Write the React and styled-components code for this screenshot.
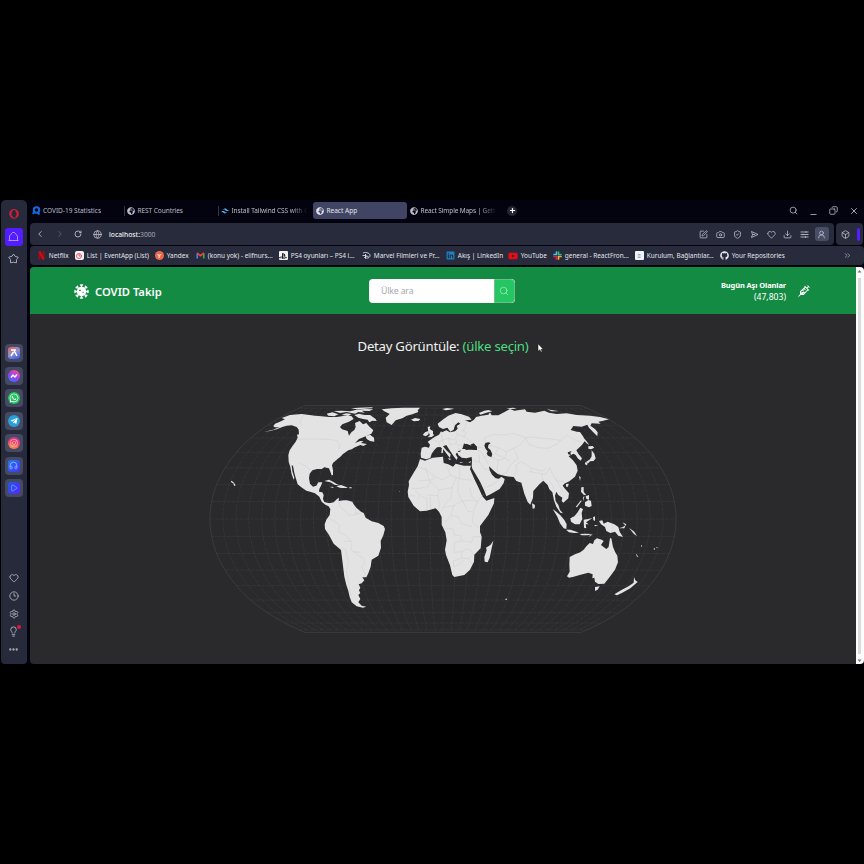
import React from "react";
import styled, { createGlobalStyle, css } from "styled-components";
import {
  FaGlobeAfrica, FaWhatsapp, FaTelegramPlane, FaInstagram,
  FaYoutube, FaGithub, FaLinkedin, FaPlaystation, FaOpera,
} from "react-icons/fa";
import { SiTailwindcss } from "react-icons/si";
import {
  Search, Minus, Copy, X, Camera, ShieldCheck, Heart, Download,
  UserRound, Box, ChevronsRight, ChevronLeft, ChevronRight,
  RotateCw, Globe, Clock3, Settings, Lightbulb, Ellipsis, Plus, SquarePen, Play, Headphones,
} from "lucide-react";

const Global = createGlobalStyle`
  * { box-sizing: border-box; }
  body { margin: 0; background: #000; font-family: "Noto Sans", "Open Sans", sans-serif; }
  svg { display: block; flex: none; }
`;

const Screen = styled.div`
  width: 864px;
  height: 864px;
  padding: 200px 0 200px 1px;
  background: #000;
  overflow: hidden;
`;
const Browser = styled.div`
  display: flex;
  height: 464px;
  background: #02030f;
`;
const Sidebar = styled.aside`
  width: 26px;
  padding-right: 1px;
  display: flex;
  flex-direction: column;
  align-items: center;
  background: #262a3a;
  border-radius: 5px 5px 4px 4px;
  color: #b4b6c2;
`;
const SideSlot = styled.div`
  width: 18px;
  height: 18px;
  margin-top: ${(p) => p.$gap || 0}px;
  display: flex;
  align-items: center;
  justify-content: center;
  flex: none;
  position: relative;
`;
const HomeButton = styled(SideSlot)`
  background: #541dff;
  border-radius: 3px;
  color: #a9a3ff;
`;
const AppButton = styled(SideSlot)`
  background: #454961;
  border-radius: 4px;
`;
const AppFace = styled.span`
  display: grid;
  place-items: center;
  width: 12px;
  height: 12px;
  color: #fff;
  background: ${(p) => p.$bg};
  border-radius: ${(p) => (p.$round ? "50%" : "3px")};
`;
const Alert = styled.span`
  position: absolute;
  top: 2px;
  right: 2px;
  width: 4px;
  height: 4px;
  border-radius: 50%;
  background: #e01844;
`;
const Main = styled.div`
  width: 834px;
  margin-left: 3px;
  display: flex;
  flex-direction: column;
`;
const TabStrip = styled.div`
  height: 23px;
  display: flex;
  align-items: flex-start;
  padding-top: 2px;
`;
const Tab = styled.div`
  width: ${(p) => p.$w}px;
  height: 17px;
  display: flex;
  align-items: center;
  gap: ${(p) => (p.$first ? 2 : 2.5)}px;
  padding-left: ${(p) => (p.$first ? 2 : 3)}px;
  font-size: 6.5px;
  letter-spacing: ${(p) => p.$ls || 0}px;
  white-space: nowrap;
  color: #bcbdc7;
  border-radius: 3px;
  flex: none;
  ${(p) => p.$divider && css`
    background: linear-gradient(#343746, #343746) 0 50% / 1px 10px no-repeat;
  `}
  ${(p) => p.$active && css`
    background: #414563;
    color: #e4e5ec;
  `}
`;
const TabText = styled.span`
  ${(p) => p.$fade && css`mask-image: linear-gradient(90deg, #000 78%, transparent);`}
`;
const NewTab = styled.div`
  width: 10px;
  height: 10px;
  margin: 3.5px 0 0 7px;
  border-radius: 50%;
  background: #242636;
  display: grid;
  place-items: center;
  color: #fff;
`;
const WindowButtons = styled.div`
  margin-left: auto;
  display: flex;
  align-items: center;
  height: 17px;
  gap: 11px;
  padding-right: 5px;
  color: #c4c5ce;
`;
const MinimizeIcon = styled(Minus)`
  margin-top: 7px;
`;
const RestoreIcon = styled(Copy)`
  transform: scaleX(-1);
`;
const AddressRow = styled.div`
  height: 22px;
  display: flex;
  gap: 2px;
  margin-bottom: 1px;
`;
const AddressBar = styled.div`
  width: 804px;
  display: flex;
  align-items: center;
  background: #272b3b;
  border-radius: 4px;
  color: #c3c5cf;
`;
const NavIcons = styled.div`
  display: grid;
  grid-template-columns: 20px 20px 16px 23px;
  width: 79px;
  align-items: center;
  justify-items: center;
`;
const Url = styled.div`
  font-size: 6.75px;
  color: #a9abb7;
  b { font-weight: 500; color: #f0f0f5; }
`;
const Actions = styled.div`
  margin-left: auto;
  display: flex;
  align-items: center;
  gap: 7.8px;
  padding-right: 8px;
`;
const Profile = styled.div`
  display: grid;
  place-items: center;
  width: 14px;
  height: 14px;
  margin: 0 -2.5px;
  background: #4a4d66;
  border-radius: 3px;
`;
const CubeBar = styled.div`
  width: 27px;
  background: #272b3b;
  border-radius: 4px;
  display: flex;
  align-items: center;
  justify-content: space-between;
  padding: 0 3px 0 5px;
  color: #c3c5cf;
`;
const Accent = styled.span`
  width: 3px;
  height: 13px;
  background: #541dff;
  border-radius: 2px;
`;
const Bookmarks = styled.div`
  height: 19px;
  display: flex;
  align-items: center;
  background: #272b3b;
  border-radius: 4px;
  margin-bottom: 2px;
  padding-left: 6.8px;
`;
const Bookmark = styled.div`
  width: ${(p) => p.$w}px;
  display: flex;
  align-items: center;
  gap: 3px;
  font-size: 6.45px;
  white-space: nowrap;
  color: #e4e5eb;
  flex: none;
`;
const MoreBookmarks = styled(ChevronsRight)`
  margin-left: 43px;
  color: #a5a7b3;
`;
const Chip = styled.span`
  width: 9px;
  height: 9px;
  flex: none;
  display: grid;
  place-items: center;
  border-radius: ${(p) => p.$r || 1}px;
  background: ${(p) => p.$bg || "transparent"};
  color: ${(p) => p.$fg || "#fff"};
  font: 700 6px/1 "Liberation Sans", sans-serif;
`;
const Page = styled.div`
  display: flex;
  height: 397px;
  border-radius: 4px;
  overflow: hidden;
`;
const Viewport = styled.main`
  width: 826px;
  background: #2a2a2c;
`;
const Header = styled.header`
  height: 47px;
  background: #138b43;
  display: flex;
  align-items: center;
  padding: 0 46px 0 44px;
  color: #fff;
`;
const Brand = styled.div`
  display: flex;
  align-items: center;
  gap: 6px;
  width: 295px;
  font-size: 11.2px;
  font-weight: 600;
  padding-top: 1px;
`;
const SearchBox = styled.div`
  display: flex;
  width: 146px;
  height: 24px;
  border-radius: 4px;
  overflow: hidden;
  background: #fff;
`;
const Field = styled.div`
  width: 125px;
  padding-left: 12px;
  font-size: 8.7px;
  letter-spacing: -0.15px;
  line-height: 25px;
  color: #a5a8ae;
`;
const SearchButton = styled.div`
  width: 21px;
  border: 1px solid #72b98d;
  border-radius: 0 4px 4px 0;
  background: #23c660;
  display: grid;
  place-items: center;
  padding-right: 1px;
  color: #a7edc1;
`;
const Vaccinated = styled.div`
  margin-left: auto;
  margin-right: 12px;
  text-align: right;
  font-size: 7.5px;
  line-height: 12px;
  b { display: block; font-weight: 700; letter-spacing: -0.12px; }
  span { font-size: 8.6px; }
`;
const Title = styled.h1`
  margin: 0;
  height: 66px;
  padding-top: 22px;
  text-align: center;
  font-size: 13.2px;
  letter-spacing: -0.26px;
  line-height: 20px;
  font-weight: 400;
  color: #f1f1f1;
  span { color: #4ade80; }
`;
const MapArea = styled.div`
  position: relative;
  height: 284px;
`;
const Pointer = styled.svg`
  position: absolute;
  left: 507px;
  top: -37px;
`;
const Scrollbar = styled.div`
  width: 8px;
  background: #fcfcfc;
  display: flex;
  flex-direction: column;
  align-items: center;
  justify-content: space-between;
  padding: 2px 1px 1px 0;
  color: #777;
`;
const Thumb = styled.span`
  width: 3px;
  height: 376px;
  background: #dadada;
`;

/* Equal Earth projection, centred on 10°E */
const K = 86.1;
const project = (lon, lat) => {
  const m = Math.sqrt(3) / 2;
  const t = Math.asin(m * Math.sin((lat * Math.PI) / 180));
  const t2 = t * t;
  const t6 = t2 * t2 * t2;
  const x = ((lon * Math.PI) / 180) * Math.cos(t) /
    (m * (1.340264 + 3 * -0.081106 * t2 + t6 * (7 * 0.000893 + 9 * 0.003796 * t2)));
  const y = t * (1.340264 - 0.081106 * t2 + t6 * (0.000893 + 0.003796 * t2));
  return `${(413 + K * x).toFixed(2)} ${(139 - K * y).toFixed(2)}`;
};
const range = (a, b, s) => Array.from({ length: Math.floor((b - a) / s) + 1 }, (_, i) => a + i * s);
const line = (pts) => "M" + pts.join("L");
const graticule = [
  ...range(-170, 170, 10).map((lon) => line(range(-80, 80, 4).map((lat) => project(lon, lat)))),
  ...range(-80, 80, 10).map((lat) => line([project(-180, lat), project(180, lat)])),
].join("");
const sphere = line([
  ...range(-90, 90, 3).map((lat) => project(-180, lat)),
  ...range(-90, 90, 3).reverse().map((lat) => project(180, lat)),
]) + "Z";

const land = [
  // North and Central America
  "M178 110 205 104 216 99 225 97 210 97 205 94 210 86 225 80 240 73 230 69 255 60 290 57 330 62 350 64 372 66 395 66 410 64 425 60 440 64 446 72 432 80 412 88 405 96 411 103 428 108 432 122 439 112 448 105 452 96 450 84 464 78 474 88 484 84 492 94 505 106 499 116 482 124 462 132 450 144 466 138 476 139 468 144 486 147 475 153 466 150 450 157 440 163 430 166 413 178 408 184 395 194 384 204 381 211 384 226 384 240 380 241 376 230 372 220 358 217 350 222 336 222 322 226 314 236 312 250 315 266 324 275 334 272 340 262 352 262 348 272 343 282 342 290 352 292 356 300 354 312 358 321 370 324 378 325 370 333 362 330 350 320 343 305 330 295 318 291 304 287 288 276 278 268 272 248 268 234 264 212 260 211 262 228 268 248 266 254 260 238 256 216 251 200 250 180 254 166 262 154 272 140 278 128 276 119 282 118 281 104 275 96 260 91 244 92 232 96 215 103 195 108Z",
  "M365 56 382 52 400 58 388 64 370 62ZM386 48 410 47 435 49 455 44 480 42 505 43 493 48 470 47 480 53 460 51 450 56 425 51 405 54ZM410 59 424 55 440 57 430 62ZM448 60 462 56 478 60 495 60 512 72 515 78 502 77 493 82 488 74 474 72 460 68ZM438 40 460 38 500 37 505 39 480 41 455 43ZM482 124 495 119 507 128 508 140 495 138 485 132Z",
  "M358 258 372 254 384 260 396 268 404 271 390 270 376 262ZM394 274 408 270 422 275 429 279 412 279 404 278ZM374 276 384 275 386 279ZM433 277 440 277 440 280 433 280Z",
  // South America
  "M370 333 376 324 386 322 396 312 402 308 401 318 416 316 426 316 442 320 446 328 454 338 468 350 476 354 482 368 500 379 520 384 536 393 540 402 535 421 527 438 528 458 520 482 500 494 497 515 490 535 484 547 472 547 478 556 470 565 461 568 466 578 462 586 466 594 460 600 466 612 460 622 470 632 484 635 474 638 455 634 440 622 434 606 430 588 424 570 418 545 413 505 408 465 386 446 372 420 360 402 359 388 364 374 374 360 376 342Z",
  // Greenland, Iceland
  "M530 43 560 40 595 38 645 38 638 46 640 51 622 58 605 62 592 70 572 76 560 90 545 82 542 68 554 57 538 49ZM618 74 630 69 646 72 642 77 627 79ZM712 42 726 39 748 41 734 44 722 46Z",
  // Europe and Asia
  "M648 188 647 176 650 158 660 155 672 158 675 149 668 140 680 132 690 125 702 119 708 109 711 112 724 106 735 112 750 109 758 101 755 93 766 86 760 82 750 91 746 104 736 110 727 98 714 102 702 96 698 86 715 73 730 62 752 54 770 58 792 65 800 74 780 76 795 82 807 74 813 66 830 62 850 59 855 52 860 61 880 61 900 50 915 42 928 47 960 43 965 50 990 53 1018 47 1032 53 1055 57 1085 55 1115 60 1155 62 1185 66 1212 73 1195 77 1180 80 1187 86 1160 85 1156 92 1170 102 1178 112 1177 124 1165 112 1152 98 1147 89 1130 95 1105 93 1097 105 1115 110 1125 111 1135 125 1140 137 1133 147 1130 151 1114 166 1120 176 1131 190 1127 197 1118 190 1112 180 1105 176 1098 180 1096 173 1100 168 1088 172 1090 178 1097 180 1091 184 1104 196 1115 211 1118 227 1110 245 1093 259 1078 266 1073 272 1080 281 1092 295 1090 310 1075 323 1070 318 1072 308 1060 300 1054 290 1050 302 1052 318 1060 330 1065 345 1074 355 1066 353 1054 335 1047 316 1042 292 1033 283 1028 270 1015 257 1003 268 985 288 984 308 976 329 968 321 958 296 949 263 934 258 926 246 905 244 888 240 878 237 868 229 852 214 854 226 861 239 872 250 882 251 889 245 899 252 896 264 884 282 858 297 844 304 838 288 826 262 812 238 802 221 800 212 801 196 800 186 784 190 770 188 760 180 756 171 765 170 772 162 784 162 800 164 816 165 816 155 806 145 796 149 800 154 790 153 777 145 774 156 770 166 760 168 752 178 758 188 755 195 746 184 734 166 724 150 714 154 724 166 737 178 735 189 726 178 716 164 706 156 696 157 688 165 680 176 676 189 664 193Z",
  // Africa
  "M645 192 660 197 683 188 714 185 716 204 730 208 744 215 752 206 777 212 798 212 795 222 808 252 820 277 832 304 844 317 868 309 867 325 850 360 825 393 825 411 830 425 827 460 808 479 807 500 795 524 778 540 748 546 742 540 735 511 723 480 720 464 725 436 721 412 710 389 710 366 702 350 692 340 665 347 645 349 626 332 610 306 608 290 612 270 611 259 625 235 638 214Z",
  "M865 437 861 455 854 488 848 502 839 500 838 486 845 466 843 458 856 450Z",
  // Britain and Ireland
  "M660 112 670 108 671 118 662 124 653 120ZM668 96 676 94 674 102 684 108 684 117 688 120 680 126 668 127 675 120 670 111Z",
  // Mediterranean and Arctic islands
  "M710 161 714 160 714 173 709 175ZM728 190 738 191 735 196ZM764 201 776 203 766 204ZM790 202 799 199 795 204ZM822 54 838 47 850 45 862 49 844 53 826 59ZM1025 43 1045 46 1062 49 1040 49ZM905 40 925 38 935 41 915 42Z",
  // Japan, Sakhalin, Taiwan, Hainan, Sri Lanka
  "M1125 116 1134 126 1146 140 1153 150 1144 144 1132 130ZM1150 154 1163 153 1168 158 1158 163 1150 161ZM1160 166 1168 176 1172 190 1166 198 1155 199 1150 205 1142 202 1155 193 1160 184ZM1140 202 1148 205 1146 211 1140 208ZM1122 243 1127 247 1125 257ZM1083 267 1091 266 1089 275 1083 275ZM981 325 990 330 989 340 983 341Z",
  // Philippines
  "M1129 277 1136 276 1136 290 1144 301 1136 299 1128 290ZM1140 322 1150 315 1158 317 1160 333 1152 337 1140 332ZM1142 304 1152 300 1152 314 1144 312ZM1134 308 1138 302 1136 318ZM1112 336 1128 316 1130 318 1116 337Z",
  // Indonesia and New Guinea
  "M1043 342 1054 350 1066 361 1078 375 1085 388 1084 402 1076 400 1065 385 1057 365ZM1083 404 1096 404 1110 409 1122 413 1108 414 1092 412ZM1124 417 1140 416 1164 417 1148 421 1130 421ZM1096 370 1108 364 1118 352 1126 338 1134 342 1130 354 1132 372 1124 388 1110 388 1098 380ZM1136 374 1150 372 1162 369 1150 377 1143 382 1151 388 1142 388 1144 400 1137 398ZM1164 367 1170 364 1170 378 1165 375ZM1168 390 1180 391 1170 394ZM1182 378 1192 376 1196 386 1208 380 1228 388 1240 396 1244 410 1254 426 1240 422 1230 410 1216 414 1204 408 1200 396 1188 388ZM1242 400 1254 396 1262 390 1258 400ZM1252 382 1264 388 1262 392ZM1272 398 1280 404 1288 410 1296 424 1286 416ZM1150 424 1163 418 1156 424Z",
  // Australia and New Zealand
  "M1094 486 1110 478 1126 472 1136 464 1144 454 1154 444 1164 447 1168 436 1176 430 1190 434 1196 438 1188 450 1204 462 1211 456 1215 430 1219 430 1224 456 1230 470 1237 482 1239 502 1230 524 1214 546 1198 566 1180 567 1170 560 1168 548 1162 550 1163 538 1150 533 1124 540 1106 545 1092 548 1086 544 1094 530 1093 510ZM1170 576 1184 574 1178 584 1170 588ZM1232 547 1238 551 1250 561 1232 566 1210 580 1186 595 1178 598 1176 594 1196 584 1216 572 1230 562Z",
  // Oceania and remote islands
  "M78 257 84 260 89 266 92 271 87 273 86 266 78 261ZM901 611 906 611 906 614 901 614ZM1292 475 1300 485 1296 485ZM1308 450 1312 453 1309 456ZM1345 462 1350 459 1350 464ZM1352 458 1358 456 1357 459ZM583 289 585 289 584 292Z",
].map((d) => d.replace("ZM1232 547 1238 551 1250 561 1232 566 1210 580 1186 595 1178 598 1176 594 1196 584 1216 572 1230 562Z",
  "ZM1287 546 1291 556 1298 561 1290 568 1276 580 1252 593 1236 601 1228 598 1248 586 1272 573 1286 563Z")).join("");

const water = [
  "M775 160 778 150 784 146 792 149 802 153 806 147 814 155 815 165 800 163 784 165Z",
  "M838 152 841 144 850 142 857 144 850 150 849 158 857 166 862 178 859 187 849 182 845 176 848 169 842 162Z",
].join("");

const borders = [
  "M276 133 305 132 345 132 382 134 398 139 404 150 402 162M284 205 302 213 310 222 322 229M296 58 285 82 292 91",
  "M402 318 405 334 420 348 430 360 450 360 462 350M376 372 396 384 404 392 400 410 424 422 440 442 438 464 458 480 476 490 480 504 470 516 482 540M408 456 422 465 430 500 424 530 430 560 438 604M415 440 440 438M444 470 466 472M452 340 452 356 468 356",
  "M638 216 660 222 690 245 680 255 640 258M661 218 674 260 670 275 648 278M690 245 712 255 736 240 725 210M736 240 764 252 764 212M764 252 803 256M676 260 702 285 698 302 668 300M702 285 742 278 752 250M698 302 704 328 700 345M742 278 738 310 724 322 710 348M760 255 758 290 772 318 746 332 722 336M772 318 800 315 818 320 836 298M794 278 800 305 818 320 805 350 802 382 822 398M772 318 790 350 800 350 M746 332 738 362 720 382M738 362 760 365 768 385 800 395M720 400 744 402 748 420 766 422 770 438 748 442 747 472M770 438 800 442 805 425 826 425M747 472 770 470 784 462 798 466 806 480M770 470 770 490 745 498M770 490 790 490 802 484M790 490 800 506M745 498 746 515 762 508 778 494M630 286 645 300 638 315M650 305 665 310 666 345M675 305 677 340M620 280 648 280M615 300 630 304",
  "M672 158 690 164M705 156 700 142 684 132M700 142 712 136 718 150M712 136 708 112M712 136 730 130 736 150M736 150 752 145 766 152 774 152M730 130 748 135 758 118 754 110M758 118 778 125 792 136 804 146M752 145 758 130M758 160 770 166M772 112 780 98 785 80 780 64M748 92 742 74 755 62M778 125 784 112 772 106M816 155 838 160M816 165 830 172 838 186 848 180",
  "M806 196 824 202 838 222 854 224M824 202 822 178M838 186 850 208M857 186 880 196 900 190 914 198M880 196 876 224 884 238M842 145 838 128 870 118 900 120 925 115 945 122 962 128 985 126 1014 130 1040 132 1066 136 1055 148 1028 160 1000 158 972 148 962 128M850 150 880 158 905 170 925 160 945 150 962 130M880 160 870 176 896 188M905 170 900 190M884 240 905 232 915 210 940 190 925 160M925 246 936 228 932 210 950 200 980 220 1010 228 1022 222M980 220 975 230 1012 236M1014 255 1010 238 1024 236 1034 218 1044 240 1055 258 1078 260M1034 258 1050 286M1052 250 1062 270 1074 290M1066 136 1085 120 1110 135 1128 140M838 278 862 270 880 256",
  "M1224 387 1222 412M1108 364 1130 356",
].join("");

const WorldMap = () => (
  <svg width="826" height="284" viewBox="0 0 826 284">
    <path d={sphere} fill="none" stroke="#424245" strokeWidth=".75" />
    <path d={graticule} fill="none" stroke="#3f3f42" strokeWidth=".5" strokeDasharray="4 1" />
    <g transform="translate(175 15) scale(.33333)">
      <path d={land} fill="#e3e3e4" />
      <path d={water} fill="#2a2a2c" />
      <path d={borders} fill="none" stroke="#c8c8ca" strokeWidth="1.1" />
    </g>
  </svg>
);

const Virus = () => (
  <svg width="15" height="15" viewBox="-12 -12 24 24" fill="#fff" stroke="#fff" strokeLinecap="round">
    <circle r="7.6" stroke="none" />
    {range(0, 315, 45).map((a) => (
      <path key={a} transform={`rotate(${a})`} d="M0-6V-10M-1.5-10.3H1.5" strokeWidth="2.4" />
    ))}
    <g fill="#138b43" stroke="none"><circle cx="-2.5" cy="-2" r="1.4" /><circle cx="2.5" cy="1.500" r="1" /></g>
  </svg>
);
const Syringe = () => (
  <svg width="12" height="12" viewBox="0 0 24 24" fill="none" stroke="#fff" strokeWidth="2.1">
    <path d="M1 23l5-5M5 19v-6L15 4l5 5L11 19H5M13 2l9 9M18 6l3-3M19 1l4 4M9 10l3 3M12 7l3 3" />
    <path d="M7 14h8l-5 4H6z" fill="#fff" stroke="none" />
  </svg>
);
const House = () => (
  <svg width="11" height="11" viewBox="0 0 22 22" fill="none" stroke="currentColor" strokeWidth="1.8" strokeLinejoin="round">
    <path d="M3 19V10l6-7h4l6 7v9M1 19h20" />
  </svg>
);
const Pinboard = () => (
  <svg width="11" height="11" viewBox="0 0 22 22" fill="none" stroke="currentColor" strokeWidth="1.8" strokeLinejoin="round">
    <path d="M11 2l3 4.500 6.500 2-3.500 4.800 0 6.200-6-1-6 1 0-6.200L1.500 8.500l6.500-2z" />
  </svg>
);
const Send = () => (
  <svg width="9" height="9" viewBox="0 0 18 18" fill="none" stroke="currentColor" strokeWidth="1.600" strokeLinejoin="round">
    <path d="M3 3l13 6-13 6 2-6zM5 9h5" />
  </svg>
);
const Controls = () => (
  <svg width="9" height="9" viewBox="0 0 18 18" fill="none" stroke="currentColor" strokeWidth="1.700">
    <path d="M1 4h16M1 9h16M1 14h16M12 2.500v3M6 7.500v3M11 12.500v3" />
  </svg>
);
const Disney = () => (
  <svg width="9" height="9" viewBox="0 0 18 18" fill="none" stroke="#e8e8ee" strokeWidth="1.6">
    <path d="M2 4C9 1 17 5 16 10c-1 5-9 5-11 3 3-3 8-3 8-1M7 6v9M1 9h8" />
  </svg>
);
const Gmail = () => (
  <svg width="9" height="9" viewBox="0 0 18 18" fill="none" strokeWidth="3.4">
    <path d="M2.500 15V5" stroke="#4285f4" /><path d="M15.500 15V5" stroke="#34a853" />
    <path d="M2 4l7 5.500L16 4" stroke="#ea4335" />
  </svg>
);
const NetflixMark = () => (
  <svg width="9" height="9" viewBox="0 0 18 18" fill="none" stroke="#d40c17" strokeWidth="4">
    <path d="M5 1v16M13 1v16" stroke="#a70a14" /><path d="M5 1l8 16" />
  </svg>
);
const Covid = () => (
  <svg width="9" height="9" viewBox="0 0 18 18" fill="none" stroke="#1769e0" strokeWidth="4">
    <circle cx="9" cy="8" r="5.500" /><path d="M4 12l-2 4M11 13l4 4" />
  </svg>
);
const SlackMark = () => (
  <svg width="9" height="9" viewBox="0 0 18 18" strokeWidth="3.400" strokeLinecap="round">
    <path d="M7 2v5M2 7h5" stroke="#36c5f0" /><path d="M11 2v5M11 7h5" stroke="#2eb67d" />
    <path d="M11 11v5M11 11h5" stroke="#ecb22e" /><path d="M7 11v5M2 11h5" stroke="#e01e5a" />
  </svg>
);
const Arrow = ({ down }) => (
  <svg width="5" height="5" viewBox="0 0 5 5"><path d={down ? "M.5 1.500h4l-2 2.500z" : "M.5 3.500h4l-2-2.500z"} fill="currentColor" /></svg>
);

const bookmarks = [
  { w: 38, icon: <NetflixMark />, t: "Netflix" },
  { w: 80, icon: <Chip $bg="#f4f4f7" $r={2} $fg="#e0566a"><Clock3 size={6} strokeWidth={4} /></Chip>, t: "List | EventApp (List)" },
  { w: 41, icon: <Chip $bg="#f0664a" $r={5}>Y</Chip>, t: "Yandex" },
  { w: 83, icon: <Gmail />, t: "(konu yok) - elifnurs..." },
  { w: 83, icon: <Chip $bg="#f3f3f3" $fg="#20222c"><FaPlaystation size={8} /></Chip>, t: "PS4 oyunları – PS4 i..." },
  { w: 84, icon: <Disney />, t: "Marvel Filmleri ve Pr..." },
  { w: 62, icon: <FaLinkedin size={9} color="#1d82c6" />, t: "Akış | LinkedIn" },
  { w: 45, icon: <FaYoutube size={10} color="#e60c17" />, t: "YouTube" },
  { w: 82, icon: <SlackMark />, t: "general - ReactFron..." },
  { w: 85, icon: <Chip $bg="#f0f3f7" $fg="#4e7190">≡</Chip>, t: "Kurulum, Bağlantılar..." },
  { w: 80, icon: <FaGithub size={9} />, t: "Your Repositories" },
];

const apps = [
  { bg: "linear-gradient(150deg,#ef624f,#8c8fd0 50%,#2858e8)", icon: <svg width="10" height="10" viewBox="0 0 20 20" stroke="#fff" strokeWidth="3"><path d="M4 4h10M10 5l6 11M9 8l-5 8" /></svg> },
  { bg: "linear-gradient(30deg,#1980ff,#a43bf4 50%,#ff5978)", round: true, icon: <svg width="10" height="10" viewBox="0 0 20 20" fill="none" stroke="#fff" strokeWidth="2.800"><path d="M4 13l4-5 4 4 4-5" /></svg> },
  { bg: "#22c55f", round: true, icon: <FaWhatsapp size={10} /> },
  { bg: "#299fda", round: true, icon: <FaTelegramPlane size={8} /> },
  { bg: "linear-gradient(20deg,#f5a446,#ee3e64 55%,#b538b8)", round: true, icon: <FaInstagram size={8} color="#ffc4c4" /> },
  { bg: "linear-gradient(135deg,#1f7df0,#4430f5)", icon: <Headphones size={9} color="#9cc3ff" /> },
  { bg: "linear-gradient(135deg,#1f58e8,#5727fa)", icon: <Play size={8} color="#7eb2ff" /> },
];

export default function App() {
  return (
    <Screen>
      <Global />
      <Browser>
        <Sidebar>
          <SideSlot $gap={5}><FaOpera size={10} color="#d31f35" /></SideSlot>
          <HomeButton $gap={4.5}><House /></HomeButton>
          <SideSlot $gap={4}><Pinboard /></SideSlot>
          {apps.map((a, i) => (
            <AppButton key={i} $gap={i ? 4.5 : 76.5}>
              <AppFace $bg={a.bg} $round={a.round}>{a.icon}</AppFace>
            </AppButton>
          ))}
          <SideSlot $gap={71.5}><Heart size={10} /></SideSlot>
          <SideSlot><Clock3 size={10} /></SideSlot>
          <SideSlot><Settings size={10} /></SideSlot>
          <SideSlot><Lightbulb size={11} /><Alert /></SideSlot>
          <SideSlot><Ellipsis size={11} strokeWidth={3} /></SideSlot>
        </Sidebar>
        <Main>
          <TabStrip>
            <Tab $w={94} $first><Covid /><TabText>COVID-19 Statistics</TabText></Tab>
            <Tab $w={94} $divider $ls={-0.05}><FaGlobeAfrica size={8} /><TabText>REST Countries</TabText></Tab>
            <Tab $w={95} $divider $ls={-0.08}><SiTailwindcss size={8} color="#4eaee8" /><TabText $fade>Install Tailwind CSS with C</TabText></Tab>
            <Tab $w={94} $active><FaGlobeAfrica size={8} /><TabText>React App</TabText></Tab>
            <Tab $w={93} $ls={-0.12}><FaGlobeAfrica size={8} /><TabText $fade>React Simple Maps | Getti</TabText></Tab>
            <NewTab><Plus size={7} strokeWidth={4} /></NewTab>
            <WindowButtons><Search size={9} /><MinimizeIcon size={9} /><RestoreIcon size={9} /><X size={10} /></WindowButtons>
          </TabStrip>
          <AddressRow>
            <AddressBar>
              <NavIcons><ChevronLeft size={10} /><ChevronRight size={10} color="#626575" /><RotateCw size={8} strokeWidth={2.5} /><Globe size={9} /></NavIcons>
              <Url><b>localhost:</b>3000</Url>
              <Actions>
                <SquarePen size={9} /><Camera size={9} /><ShieldCheck size={9} /><Send />
                <Heart size={9} /><Download size={9} /><Controls />
                <Profile><UserRound size={9} /></Profile>
              </Actions>
            </AddressBar>
            <CubeBar><Box size={9} /><Accent /></CubeBar>
          </AddressRow>
          <Bookmarks>
            {bookmarks.map((b) => (
              <Bookmark key={b.t} $w={b.w}>{b.icon}{b.t}</Bookmark>
            ))}
            <MoreBookmarks size={9} />
          </Bookmarks>
          <Page>
            <Viewport>
              <Header>
                <Brand><Virus />COVID Takip</Brand>
                <SearchBox>
                  <Field>Ülke ara</Field>
                  <SearchButton><Search size={10} strokeWidth={1.8} /></SearchButton>
                </SearchBox>
                <Vaccinated><b>Bugün Aşı Olanlar</b><span>(47,803)</span></Vaccinated>
                <Syringe />
              </Header>
              <Title>Detay Görüntüle: <span>(ülke seçin)</span></Title>
              <MapArea>
                <WorldMap />
                <Pointer width="8" height="10" viewBox="0 0 8 10">
                  <path d="M1 .8v7.500l1.800-1.600 1.200 2.400 1.200-.6-1.200-2.300h2.300z" fill="#fff" stroke="#111" strokeWidth=".5" />
                </Pointer>
              </MapArea>
            </Viewport>
            <Scrollbar><Arrow /><Thumb /><Arrow down /></Scrollbar>
          </Page>
        </Main>
      </Browser>
    </Screen>
  );
}
